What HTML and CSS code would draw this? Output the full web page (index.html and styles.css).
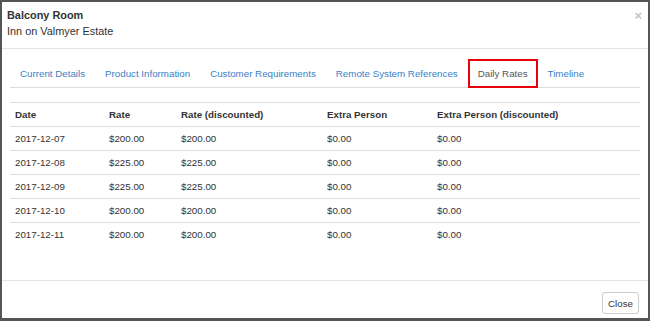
FILE: index.html
```html
<!DOCTYPE html>
<html>
<head>
<meta charset="utf-8" />
<title>Balcony Room</title>
<link rel="stylesheet" href="styles.css">
</head>
<body>
<div class="modal">
	<div class="modal-header">
		<div class="modal-title">
			<h4>Balcony Room</h4>
			<p>Inn on Valmyer Estate</p>
		</div>
		<button type="button" class="close">&times;</button>
	</div>

	<div class="modal-body">
		<ul class="nav-tabs">
			<li><a href="#">Current Details</a></li>
			<li><a href="#">Product Information</a></li>
			<li><a href="#">Customer Requirements</a></li>
			<li><a href="#">Remote System References</a></li>
			<li class="active"><a href="#">Daily Rates</a></li>
			<li><a href="#">Timeline</a></li>
		</ul>

		<table class="rates">
			<colgroup>
				<col class="c-date" />
				<col class="c-rate" />
				<col class="c-disc" />
				<col class="c-extra" />
				<col />
			</colgroup>
			<thead>
				<tr>
					<th>Date</th>
					<th>Rate</th>
					<th>Rate (discounted)</th>
					<th>Extra Person</th>
					<th>Extra Person (discounted)</th>
				</tr>
			</thead>
			<tbody>
				<tr><td>2017-12-07</td><td>$200.00</td><td>$200.00</td><td>$0.00</td><td>$0.00</td></tr>
				<tr><td>2017-12-08</td><td>$225.00</td><td>$225.00</td><td>$0.00</td><td>$0.00</td></tr>
				<tr><td>2017-12-09</td><td>$225.00</td><td>$225.00</td><td>$0.00</td><td>$0.00</td></tr>
				<tr><td>2017-12-10</td><td>$200.00</td><td>$200.00</td><td>$0.00</td><td>$0.00</td></tr>
				<tr><td>2017-12-11</td><td>$200.00</td><td>$200.00</td><td>$0.00</td><td>$0.00</td></tr>
			</tbody>
		</table>
	</div>

	<div class="modal-footer">
		<button type="button" class="btn">Close</button>
	</div>
</div>
</body>
</html>
```

FILE: styles.css
```css
*{
	box-sizing: border-box;
}
html, body{
	margin: 0;
	padding: 0;
	background: #fff;
}
body{
	font-family: "Liberation Sans", Arial, sans-serif;
	font-size: 9.75px;
	color: #333;
}
.modal{
	display: flex;
	flex-direction: column;
	width: 650px;
	height: 321px;
	border: 2px solid #555;
	border-bottom-width: 3px;
	background: #fff;
}
.modal-header{
	display: flex;
	justify-content: space-between;
	align-items: flex-start;
	padding: 5px 6px 9px 5px;
	border-bottom: 1px solid #e5e5e5;
}
.modal-title h4,
.modal-title p{
	margin: 0;
	line-height: 16px;
	font-size: 10.9px;
	color: #333;
}
.modal-title h4{
	font-weight: bold;
}
.close{
	margin: 3px 0 0;
	padding: 0;
	border: 0;
	background: none;
	font-family: "Liberation Sans", Arial, sans-serif;
	font-size: 13px;
	font-weight: bold;
	line-height: 12px;
	color: #c4c4c4;
	cursor: pointer;
}
.modal-body{
	flex: 1;
	padding: 10px 8px 0;
}
.nav-tabs{
	display: flex;
	margin: 0;
	padding: 0;
	list-style: none;
	border-bottom: 1px solid #ddd;
}
.nav-tabs li{
	margin-bottom: -1px;
}
.nav-tabs a{
	display: block;
	height: 29px;
	line-height: 26px;
	padding: 1px 9px 0;
	border: 1px solid transparent;
	color: #3a80c6;
	text-decoration: none;
}
.nav-tabs .active a{
	padding: 1px 8px 0;
	border: 2px solid #e8000b;
	line-height: 24px;
	color: #555;
}
.rates{
	width: 100%;
	margin-top: 14px;
	border-collapse: collapse;
	table-layout: fixed;
}
.rates .c-date{ width: 94px; }
.rates .c-rate{ width: 72px; }
.rates .c-disc{ width: 146px; }
.rates .c-extra{ width: 110px; }
.rates th,
.rates td{
	height: 24px;
	padding: 0 5px;
	text-align: left;
	vertical-align: middle;
	border-top: 1px solid #ddd;
	white-space: nowrap;
}
.rates th{
	font-weight: bold;
}
.modal-footer{
	display: flex;
	justify-content: flex-end;
	align-items: flex-start;
	height: 38px;
	padding: 11px 9px 0;
	border-top: 1px solid #e5e5e5;
}
.btn{
	height: 22px;
	padding: 0 5px;
	border: 1px solid #ccc;
	border-radius: 3px;
	background: #fff;
	font-family: "Liberation Sans", Arial, sans-serif;
	font-size: 9.75px;
	color: #333;
}
```
